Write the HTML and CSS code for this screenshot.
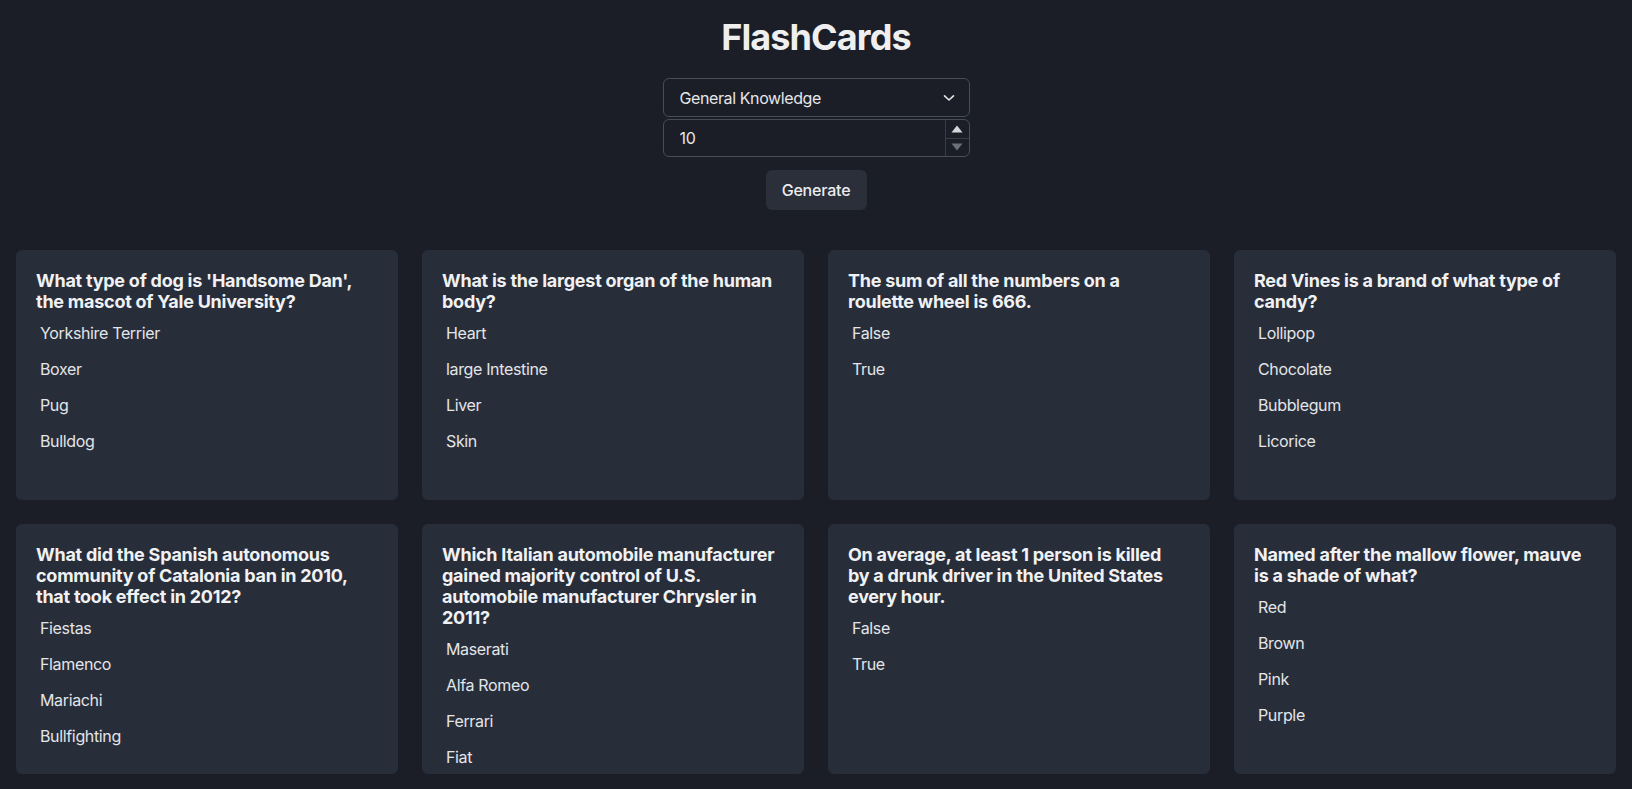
FILE: index.html
```html
<!DOCTYPE html>
<html lang="en">
<head>
<meta charset="utf-8">
<title>FlashCards</title>
<link rel="stylesheet" href="styles.css">
</head>
<body>
<div class="app">
  <header class="controls">
    <h1 class="title">FlashCards</h1>
    <div class="select">
      <span class="select-value">General Knowledge</span>
      <svg class="chevron" width="12" height="8" viewBox="0 0 12 8"><path d="M1.5 1.8 L6 6 L10.5 1.8" fill="none" stroke="#e6e6e6" stroke-width="1.6" stroke-linecap="round" stroke-linejoin="round"/></svg>
    </div>
    <div class="number">
      <span class="number-value">10</span>
      <div class="spinner">
        <div class="spin up"><svg width="12" height="8" viewBox="0 0 12 8"><path d="M6 0.5 L11.5 7.5 L0.5 7.5 Z" fill="#d4d6da"/></svg></div>
        <div class="spin down"><svg width="12" height="8" viewBox="0 0 12 8"><path d="M0.5 0.5 L11.5 0.5 L6 7.5 Z" fill="#6c707a"/></svg></div>
      </div>
    </div>
    <button class="generate">Generate</button>
  </header>

  <main class="cards">
    <section class="card">
      <h3 class="question">What type of dog is 'Handsome Dan', the mascot of Yale University?</h3>
      <ul class="answers"><li>Yorkshire Terrier</li><li>Boxer</li><li>Pug</li><li>Bulldog</li></ul>
    </section>
    <section class="card">
      <h3 class="question">What is the largest organ of the human body?</h3>
      <ul class="answers"><li>Heart</li><li>large Intestine</li><li>Liver</li><li>Skin</li></ul>
    </section>
    <section class="card">
      <h3 class="question">The sum of all the numbers on a roulette wheel is 666.</h3>
      <ul class="answers"><li>False</li><li>True</li></ul>
    </section>
    <section class="card">
      <h3 class="question">Red Vines is a brand of what type of candy?</h3>
      <ul class="answers"><li>Lollipop</li><li>Chocolate</li><li>Bubblegum</li><li>Licorice</li></ul>
    </section>
    <section class="card">
      <h3 class="question">What did the Spanish autonomous community of Catalonia ban in 2010, that took effect in 2012?</h3>
      <ul class="answers"><li>Fiestas</li><li>Flamenco</li><li>Mariachi</li><li>Bullfighting</li></ul>
    </section>
    <section class="card">
      <h3 class="question">Which Italian automobile manufacturer gained majority control of U.S. automobile manufacturer Chrysler in 2011?</h3>
      <ul class="answers"><li>Maserati</li><li>Alfa Romeo</li><li>Ferrari</li><li>Fiat</li></ul>
    </section>
    <section class="card">
      <h3 class="question">On average, at least 1 person is killed by a drunk driver in the United States every hour.</h3>
      <ul class="answers"><li>False</li><li>True</li></ul>
    </section>
    <section class="card">
      <h3 class="question">Named after the mallow flower, mauve is a shade of what?</h3>
      <ul class="answers"><li>Red</li><li>Brown</li><li>Pink</li><li>Purple</li></ul>
    </section>
  </main>
</div>
</body>
</html>
```
FILE: styles.css
```css
* { box-sizing: border-box; }
html, body {
  margin: 0;
  background: #1b1e27;
  font-family: Inter, "Noto Sans", "Liberation Sans", sans-serif;
  color: #e6e7ea;
}
.app {
  padding: 15px 16px 16px;
}
.controls {
  display: flex;
  flex-direction: column;
  align-items: center;
}
.title {
  margin: 0 0 19px;
  font-size: 36px;
  font-weight: 700;
  line-height: normal;
  letter-spacing: -0.9px;
  color: #efeff0;
}
.select {
  width: 307px;
  height: 39px;
  border: 1px solid #474c57;
  border-radius: 6px;
  display: flex;
  align-items: center;
  justify-content: space-between;
  padding: 0 14px 0 16px;
  font-size: 16px;
  letter-spacing: -0.4px;
  color: #e6e7ea;
}
.chevron { display: block; margin-top: 1px; }
.number {
  margin-top: 2px;
  width: 307px;
  height: 38px;
  border: 1px solid #474c57;
  border-radius: 6px;
  display: flex;
  align-items: stretch;
  font-size: 16px;
  letter-spacing: -0.3px;
  color: #e6e7ea;
}
.number-value {
  flex: 1;
  display: flex;
  align-items: center;
  padding-left: 16px;
}
.spinner {
  width: 24px;
  display: flex;
  flex-direction: column;
  border-left: 1px solid #393d48;
}
.spin {
  flex: 1;
  display: flex;
  align-items: center;
  justify-content: center;
}
.spin svg { display: block; }
.spin.up { border-bottom: 1px solid #393d48; }
.generate {
  margin-top: 13px;
  height: 40px;
  width: 101px;
  border: none;
  border-radius: 6px;
  background: #2a2f3a;
  color: #ececee;
  font-family: inherit;
  font-size: 16px;
  font-weight: 500;
  letter-spacing: -0.2px;
  padding: 0 16px;
}
.cards {
  margin-top: 40px;
  display: grid;
  grid-template-columns: repeat(4, 1fr);
  column-gap: 24px;
  row-gap: 24px;
}
.card {
  height: 250px;
  background: #282d3a;
  border-radius: 6px;
  padding: 20px;
}
.question {
  margin: 0;
  padding-right: 6px;
  font-size: 18px;
  font-weight: 700;
  line-height: normal;
  letter-spacing: -0.25px;
  color: #f0f1f3;
}
.answers {
  list-style: none;
  margin: 3px 0 0;
  padding: 0;
}
.answers li {
  padding: 8px 4px;
  font-size: 16px;
  line-height: 20px;
  letter-spacing: -0.35px;
  color: #e3e5e8;
}
```
